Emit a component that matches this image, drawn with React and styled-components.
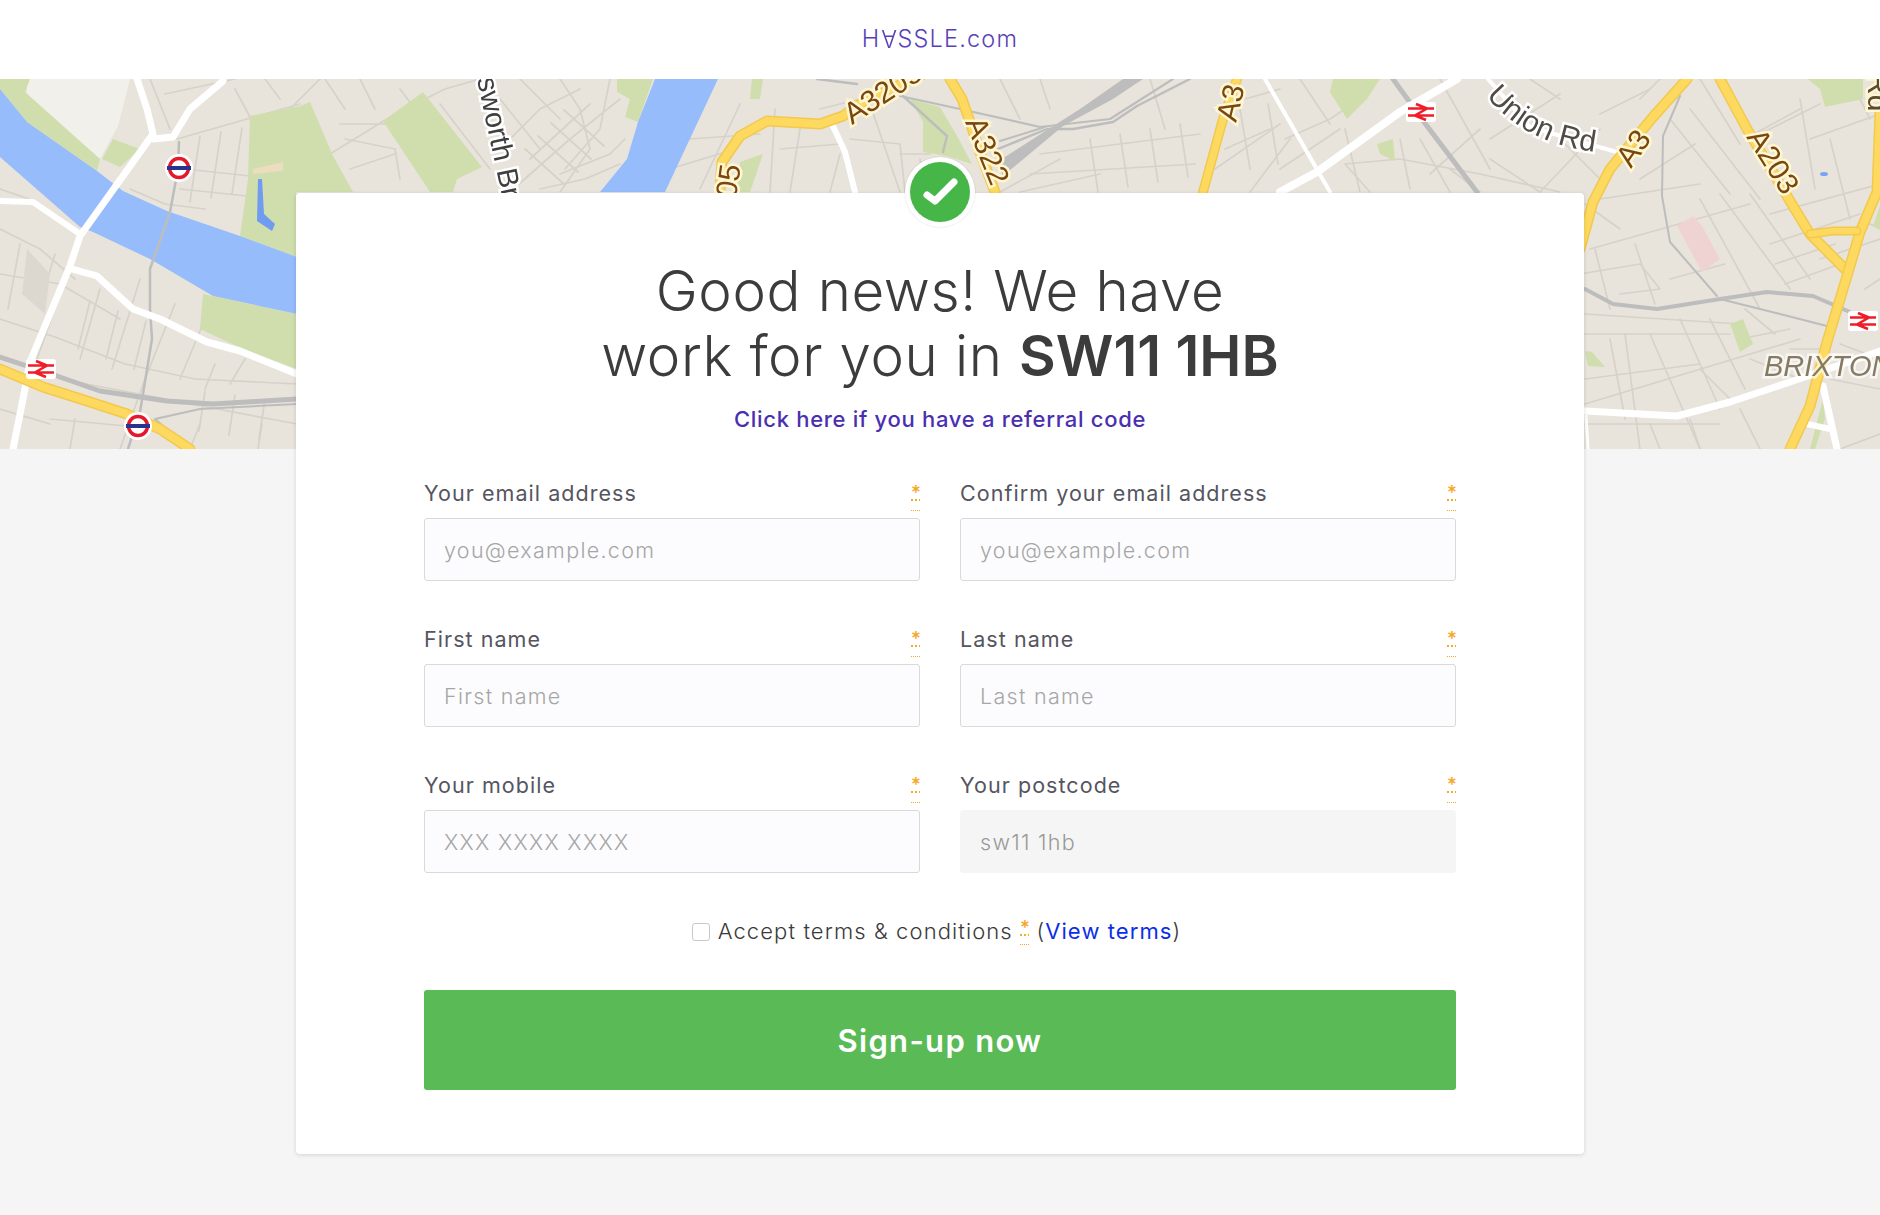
import React from 'react'
import styled, { createGlobalStyle } from 'styled-components'

const FONT = `Inter, "Liberation Sans", sans-serif`

const GlobalStyle = createGlobalStyle`
  html, body {
    margin: 0;
    background: #f5f5f5;
    font-family: ${FONT};
  }
  * { box-sizing: border-box; }
`

const Header = styled.header`
  height: 79px;
  padding-bottom: 3px;
  background: #fff;
  display: flex;
  align-items: center;
  justify-content: center;
`

const Logo = styled.a`
  color: #5a3fb8;
  font-size: 23.5px;
  font-weight: 300;
  letter-spacing: 1.2px;
  text-decoration: none;
`

const FlippedA = styled.span`
  display: inline-block;
  transform: rotate(180deg);
`

const MapBand = styled.div`
  height: 370px;
  overflow: hidden;
  background: #e8e4dc;

  svg {
    display: block;
    filter: blur(0.7px);
  }
`

const Card = styled.main`
  position: relative;
  width: 1288px;
  margin: -256px auto 61px;
  padding: 65px 128px 64px;
  background: #fff;
  border-radius: 4px;
  box-shadow: 0 1px 4px rgba(0, 0, 0, 0.14);
`

const Badge = styled.div`
  position: absolute;
  top: -36px;
  left: 609px;
  width: 70px;
  height: 70px;
  padding: 5px;
  border-radius: 50%;
  background: #fff;
  box-shadow: 0 0 2px rgba(0, 0, 0, 0.15);

  svg { display: block; }
`

const Heading = styled.h1`
  margin: 0;
  color: #3c3c3c;
  font-size: 56.5px;
  font-weight: 300;
  line-height: 65px;
  letter-spacing: 0.6px;
  text-align: center;

  strong { font-weight: 600; letter-spacing: 0; }
`

const Referral = styled.a`
  display: block;
  margin-top: 16px;
  color: #4a2fb0;
  font-size: 22px;
  font-weight: 500;
  line-height: 30px;
  letter-spacing: 0.7px;
  text-align: center;
  text-decoration: none;
`

const Fields = styled.form`
  margin-top: 49px;
`

const FieldGrid = styled.div`
  display: grid;
  grid-template-columns: 496px 496px;
  column-gap: 40px;
  row-gap: 48px;
`

const Field = styled.label`
  display: block;
`

const LabelRow = styled.span`
  display: flex;
  justify-content: space-between;
  height: 35px;
  color: #55555f;
  font-size: 21.5px;
  font-weight: 400;
  line-height: 20px;
  letter-spacing: 1.05px;
`

const Required = styled.abbr`
  display: inline-block;
  width: 9px;
  height: ${p => (p.$inline ? '27px' : '28px')};
  color: #f5a623;
  font-size: 19px;
  font-weight: 500;
  line-height: 20px;
  letter-spacing: 0;
  text-align: center;
  border-bottom: 1px dotted #f5a623;
`

const Input = styled.input`
  display: block;
  width: 100%;
  height: 63px;
  padding: 0 19px;
  font-family: ${FONT};
  font-size: 21.5px;
  font-weight: 300;
  letter-spacing: 1.3px;
  color: #999;
  background: ${p => (p.disabled ? '#f5f5f5' : '#fcfcfe')};
  border: 1px solid ${p => (p.disabled ? '#f5f5f5' : '#d9d9d9')};
  border-radius: 3px;
  outline: none;

  &::placeholder { color: #a6a6a6; opacity: 1; }
  &:disabled { color: #999; }
`

const TermsRow = styled.div`
  display: flex;
  align-items: center;
  justify-content: center;
  height: 40px;
  margin-top: 38px;
  padding-right: 7px;
  color: #3a3a3a;
  font-size: 22px;
  font-weight: 300;
  letter-spacing: 1.1px;
  white-space: pre;
`

const Checkbox = styled.input`
  appearance: none;
  width: 18px;
  height: 18px;
  margin: 2px 8px 0 0;
  background: #fff;
  border: 1.5px solid #c8c8c8;
  border-radius: 3px;
`

const TermsLink = styled.a`
  color: #0b2fe6;
  font-weight: 400;
  text-decoration: none;
`

const SubmitButton = styled.button`
  display: block;
  width: 100%;
  height: 100px;
  margin-top: 39px;
  padding: 0;
  color: #fff;
  font-family: ${FONT};
  font-size: 31px;
  font-weight: 600;
  letter-spacing: 1.3px;
  background: #5aba55;
  border: 0;
  border-radius: 3px;
`

const hatch = (x, y, dx, dy, sx, sy, n) =>
  Array.from({ length: n }, (_, i) => {
    const ax = x + i * sx
    const ay = y + i * sy
    return `${ax},${ay} ${ax + dx},${ay + dy}`
  })

const streets = [
  // left of the card
  '0,110 35,122 80,155', '0,150 40,170 75,200', '0,195 60,205 120,240', '0,240 55,258 125,285 195,300 297,305',
  '60,215 30,300', '20,165 8,230', '55,175 40,225', '100,210 80,280', '140,200 112,290', '175,225 145,300 120,370',
  '205,240 180,300', '60,300 297,345', '50,340 160,350', '165,15 235,0', '177,60 300,25', '150,0 170,50',
  '185,90 250,97', '180,110 247,117', '0,330 50,345', '75,340 70,370', '200,345 190,370', '262,345 258,370',
  '265,0 280,20', '235,10 250,38', '130,110 165,125 205,130', '215,285 205,310', '245,280 230,305', '150,170 190,195',
  ...hatch(200, 57, -10, 66, 21, -4, 3),
  ...hatch(90, 222, -12, 48, 28, 10, 3),
  ...hatch(205, 312, -6, 40, 30, 4, 3),
  // strip between the map edges above the card
  '290,30 320,0', '330,75 395,35 445,10 480,0', '360,0 375,30', '400,10 430,50', '325,0 345,30',
  '340,45 390,45', '345,60 395,70 400,100', '350,90 395,75', '440,25 490,90',
  '500,20 540,70', '520,0 560,40', '560,0 580,30 590,70 560,113',
  '500,70 540,30 580,10', '530,80 590,25', '510,113 570,60 620,20', '560,95 610,75 625,60', '610,0 600,50 565,90',
  '540,110 585,100 620,85', ...hatch(525, 70, 40, 36, 13, -13, 4),
  '690,15 690,60 760,55', '740,25 700,110', '775,30 770,113', '800,50 790,113', '780,70 840,65', '670,90 735,70',
  '820,30 860,20', '840,75 830,113', '850,60 900,65 905,113', '870,25 900,113', '900,75 930,75', '920,80 925,113',
  // right of the badge
  ...hatch(1090, 60, 8, 53, 30, -5, 4), '1150,0 1165,50',
  '1040,75 1200,55', '1030,95 1195,85', '1020,113 1100,95', '1060,80 1000,113',
  '1000,0 1020,40', '1040,0 1050,30', '1245,20 1280,10', '1215,90 1280,45', '1250,113 1290,60',
  '1225,70 1270,50', ...hatch(1240, 30, 10, 60, 28, -5, 2), '1285,60 1330,40 1360,20', '1280,90 1340,50', '1345,50 1360,113',
  '1370,113 1345,85 1400,80 1480,95 1560,113', '1400,60 1410,110', '1420,60 1450,113', '1440,0 1490,90',
  '1480,50 1430,95', '1490,80 1540,113', '1490,60 1560,15', '1540,113 1600,50', '1560,60 1600,100', '1530,0 1560,20',
  '1300,0 1330,45', '1450,90 1480,113',
  // right of the card
  '1640,20 1660,0', '1600,35 1650,10', '1700,0 1740,65', '1670,40 1730,115', '1690,30 1760,120', '1745,60 1800,30',
  '1760,55 1820,25', '1810,60 1880,35', '1830,60 1850,140', '1770,135 1880,105', '1800,20 1815,110',
  '1590,170 1750,125', '1600,120 1700,105', '1640,100 1695,65', '1585,125 1620,150',
  '1700,120 1760,230', '1720,115 1790,210', '1750,115 1810,200', '1770,165 1860,135', '1775,185 1835,165', '1785,205 1840,185',
  '1595,170 1610,230', '1635,165 1655,225', '1580,195 1640,185 1660,210 1620,215', '1670,200 1725,185',
  '1585,235 1740,245', '1585,255 1730,255', '1625,255 1640,370', '1650,255 1700,370', '1680,240 1720,330', '1710,240 1745,310',
  '1745,230 1775,255', '1585,300 1700,285', '1610,260 1625,340', '1585,325 1800,260', '1700,290 1730,320', '1740,260 1790,250',
  '1750,280 1800,300', '1585,345 1720,345', '1650,345 1660,370', '1740,330 1760,370', '1690,340 1700,370',
  '1860,140 1880,150', '1840,265 1880,280', '1840,370 1880,355', '1830,300 1880,310', '1850,0 1870,40', '1820,180 1880,160',
  '1865,210 1880,200', '1790,270 1830,270',
]

const parks = [
  '0,0 30,0 25,13 100,80 97,92 27,43 0,10',
  '113,60 140,70 120,88 102,80',
  '250,37 300,27 310,23 333,77 353,113 296,113 297,178 240,157 248,100',
  '203,215 297,235 297,290 243,270 200,250',
  '383,42 423,13 482,88 457,100 453,113 430,113',
  '617,0 653,0 638,43 625,38 630,20 617,13',
  '752,0 763,0 760,20 750,20',
  '740,83 763,75 750,113 737,113',
  '910,20 940,28 957,57 972,85 947,77 923,73 923,43',
  '1333,0 1380,0 1367,20 1347,40 1330,13',
  '1377,65 1393,60 1395,82 1380,75',
  '1808,0 1863,0 1863,20 1825,28 1820,10',
  '1730,245 1743,240 1753,265 1740,273',
  '1585,272 1592,273 1605,288 1588,287',
  '1873,147 1880,127 1880,150',
  '1810,370 1823,320 1825,340 1815,370',
]

const rivers = [
  '0,10 27,43 97,92 123,112 167,132 240,157 297,178 297,235 213,217 150,180 93,153 80,148 0,78',
  '655,0 718,0 665,113 600,113 627,80 638,43',
]

const rails = [
  { d: '0,278 57,297 100,312 167,322 213,325 297,320', w: 5 },
  { d: '1393,0 1427,47 1477,113', w: 5 },
  { d: '1585,210 1613,225 1657,230 1720,220 1767,213 1813,217 1850,233', w: 4 },
  { d: '1720,220 1780,235 1827,247', w: 2.2 },
  { d: '1680,17 1663,57 1662,117 1670,163 1717,217', w: 2 },
  { d: '179,63 178,90 170,133 150,190 150,230 152,260 140,333 128,370', w: 2.5 },
  { d: '190,370 155,340 200,330 297,325', w: 2 },
  { d: '900,17 960,30 1040,48 1110,40 1173,0', w: 2.2 },
  { d: '993,72 1047,50 1073,50 1113,43 1137,27 1190,0', w: 2.4 },
  { d: '1000,62 1045,48', w: 2 },
  { d: '903,17 947,57 943,73', w: 2.4 },
  { d: '817,0 857,5', w: 2.4 },
]

const whiteRoads = [
  { d: '137,0 147,30 153,55 80,157 70,187 30,283 23,320 13,370', w: 7 },
  { d: '153,60 173,58 190,30 223,2', w: 7 },
  { d: '0,122 33,123 80,155', w: 6 },
  { d: '72,190 97,197 133,230 160,240 207,263 240,272 297,295', w: 7 },
  { d: '832,45 845,73 855,113', w: 6 },
  { d: '1265,0 1330,113', w: 4 },
  { d: '1280,113 1317,93 1400,33 1457,0', w: 8 },
  { d: '1488,0 1530,48 1620,74', w: 4 },
  { d: '1585,332 1677,337 1730,323 1793,302 1880,272', w: 7 },
  { d: '1823,307 1837,370', w: 7 },
  { d: '1807,345 1830,350', w: 6 },
  { d: '1586,337 1588,370', w: 3 },
]

const yellowRoads = [
  { d: '0,290 43,308 87,322 127,335 160,350 190,370', w: 11 },
  { d: '720,110 722,83 740,57 767,42 820,45 843,37 863,23 930,-8', w: 11 },
  { d: '950,0 962,20 970,43 980,73 995,113', w: 11 },
  { d: '1237,0 1223,40 1203,113', w: 10 },
  { d: '1687,0 1653,38 1610,90 1593,123 1580,170', w: 11 },
  { d: '1720,0 1747,50 1793,127 1810,155 1847,192', w: 11 },
  { d: '1880,33 1877,113 1860,153 1847,197 1827,263 1810,327 1790,370', w: 11 },
  { d: '1810,155 1833,152 1857,152', w: 9 },
]

const Polyline = ({ points, color, width }) => (
  <polyline
    points={points}
    fill="none"
    stroke={color}
    strokeWidth={width}
    strokeLinejoin="round"
    strokeLinecap="round"
  />
)

const RoadLabel = styled.text`
  font-family: "Liberation Sans", sans-serif;
  font-size: ${p => p.$size || 30}px;
  font-style: ${p => (p.$italic ? 'italic' : 'normal')};
  fill: ${p => p.$color || '#7a4610'};
  stroke: ${p => p.$halo || '#fff6d2'};
  stroke-width: 5px;
  paint-order: stroke;
`

const TubeMark = ({ x, y }) => (
  <g transform={`translate(${x} ${y})`}>
    <circle r="14" fill="#fff" />
    <circle r="9.5" fill="#fff" stroke="#e3192b" strokeWidth="3.5" />
    <rect x="-12" y="-2" width="24" height="4" fill="#27348f" />
  </g>
)

const RailMark = ({ x, y }) => (
  <g transform={`translate(${x} ${y})`}>
    <rect x="-15" y="-10" width="30" height="20" rx="3" fill="#fff" />
    <path
      d="M-13 -3.5H13M-13 3.5H13M-5 -8L6 -3.5L-6 3.5L5 8"
      fill="none"
      stroke="#f01c28"
      strokeWidth="2.6"
    />
  </g>
)

const StreetMap = () => (
  <svg width="1880" height="370" viewBox="0 0 1880 370">
    <polygon points="27,0 130,0 118,47 100,80 27,30" fill="#f1f0ea" />
    {streets.map((s, i) => (
      <Polyline key={i} points={s} color="#d6d2ca" width="1.7" />
    ))}
    <polygon points="1677,147 1693,137 1702,147 1720,180 1702,193" fill="#efd3d3" />
    <polygon points="27,170 50,195 45,235 22,215" fill="#dcd8d0" />
    {parks.map((p, i) => (
      <polygon key={i} points={p} fill="#cfdeac" />
    ))}
    <polygon points="253,90 283,83 283,92 253,95" fill="#ecdcc0" />
    {rivers.map((r, i) => (
      <polygon key={i} points={r} fill="#97bcfb" />
    ))}
    <polygon points="258,100 262,100 264,135 275,145 272,152 257,142" fill="#6f9cf0" />
    <ellipse cx="1824" cy="95" rx="4" ry="2" fill="#7aa2f2" />
    <polygon points="997,83 1080,30 1123,0 1143,0 1113,20 1063,47 1003,97" fill="#bdbdbd" />
    {rails.map((r, i) => (
      <Polyline key={i} points={r.d} color="#bdbdbd" width={r.w} />
    ))}
    {whiteRoads.map((r, i) => (
      <Polyline key={i} points={r.d} color="#fff" width={r.w} />
    ))}
    {yellowRoads.map((r, i) => (
      <g key={i}>
        <Polyline points={r.d} color="#f2c94e" width={r.w} />
        <Polyline points={r.d} color="#fdd95f" width={r.w - 3} />
      </g>
    ))}
    <RoadLabel transform="translate(477 0) rotate(78)" $color="#3f3f3f" $halo="#fff" $size={29}>
      sworth Br
    </RoadLabel>
    <RoadLabel transform="translate(731 156) rotate(-82)">A205</RoadLabel>
    <RoadLabel transform="translate(852 46) rotate(-33)">A3205</RoadLabel>
    <RoadLabel transform="translate(965 43) rotate(68)">A322</RoadLabel>
    <RoadLabel transform="translate(1236 44) rotate(-76)">A3</RoadLabel>
    <RoadLabel transform="translate(1631 90) rotate(-55)">A3</RoadLabel>
    <RoadLabel transform="translate(1746 58) rotate(58)">A203</RoadLabel>
    <RoadLabel transform="translate(1868 -6) rotate(90)" $color="#5b4a30">Rd</RoadLabel>
    <RoadLabel $color="#4f4c46" $halo="#fff" $size={30}>
      <textPath href="#union-rd">Union Rd</textPath>
    </RoadLabel>
    <path id="union-rd" d="M1486,17 Q1530,70 1610,74" fill="none" />
    <RoadLabel x="1764" y="297" $italic $color="#867b62" $halo="rgba(255,255,255,0.65)" $size={29}>
      BRIXTON
    </RoadLabel>
    <TubeMark x={179} y={89} />
    <TubeMark x={138} y={347} />
    <RailMark x={41} y={290} />
    <RailMark x={1421} y={33} />
    <RailMark x={1863} y={242} />
  </svg>
)

const fields = [
  { label: 'Your email address', placeholder: 'you@example.com', type: 'email' },
  { label: 'Confirm your email address', placeholder: 'you@example.com', type: 'email' },
  { label: 'First name', placeholder: 'First name' },
  { label: 'Last name', placeholder: 'Last name' },
  { label: 'Your mobile', placeholder: 'XXX XXXX XXXX', type: 'tel' },
  { label: 'Your postcode', value: 'sw11 1hb', disabled: true },
]

export default function App() {
  return (
    <>
      <GlobalStyle />
      <Header>
        <Logo href="#">H<FlippedA>A</FlippedA>SSLE.com</Logo>
      </Header>
      <MapBand>
        <StreetMap />
      </MapBand>
      <Card>
        <Badge>
          <svg width="60" height="60" viewBox="0 0 60 60">
            <circle cx="30" cy="30" r="30" fill="#46b649" />
            <polyline
              points="17,33 25,39 44,20"
              fill="none"
              stroke="#fff"
              strokeWidth="7"
              strokeLinecap="round"
              strokeLinejoin="round"
            />
          </svg>
        </Badge>
        <Heading>
          Good news! We have
          <br />
          work for you in <strong>SW11 1HB</strong>
        </Heading>
        <Referral href="#">Click here if you have a referral code</Referral>
        <Fields onSubmit={e => e.preventDefault()}>
          <FieldGrid>
            {fields.map(f => (
              <Field key={f.label}>
                <LabelRow>
                  {f.label}
                  <Required title="required">*</Required>
                </LabelRow>
                <Input
                  type={f.type || 'text'}
                  placeholder={f.placeholder}
                  defaultValue={f.value}
                  disabled={f.disabled}
                />
              </Field>
            ))}
          </FieldGrid>
          <TermsRow>
            <Checkbox type="checkbox" />
            Accept terms &amp; conditions <Required $inline title="required">*</Required> (<TermsLink href="#">View terms</TermsLink>)
          </TermsRow>
          <SubmitButton type="submit">Sign-up now</SubmitButton>
        </Fields>
      </Card>
    </>
  )
}
